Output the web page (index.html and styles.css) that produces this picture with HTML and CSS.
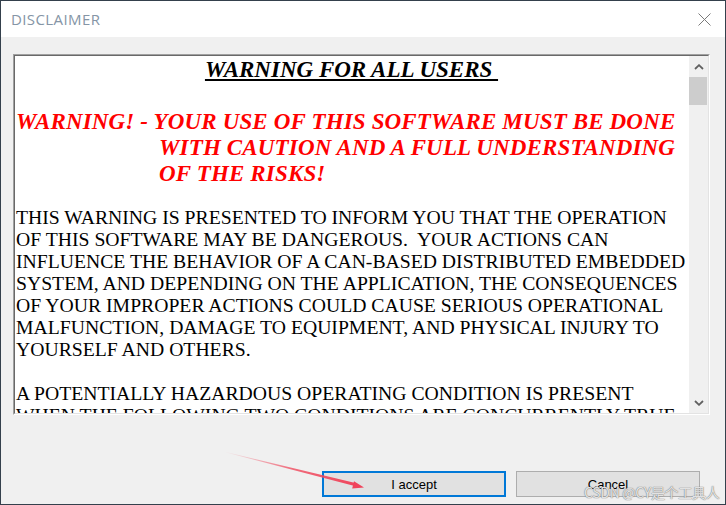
FILE: index.html
```html
<!DOCTYPE html>
<html>
<head>
<meta charset="utf-8">
<link rel="stylesheet" href="styles.css">
</head>
<body>
<div class="window">
  <div class="titlebar">
    <span class="title">DISCLAIMER</span>
    <svg class="close" width="13" height="13" viewBox="0 0 13 13"><path d="M0.5 0.5 L12.5 12.5 M12.5 0.5 L0.5 12.5" stroke="#7a7a7a" stroke-width="1" fill="none"/></svg>
  </div>
  <div class="body">
    <div class="textbox">
      <div class="textbox-inner">
        <div class="content">
          <p class="heading">WARNING FOR ALL USERS&nbsp;</p>
          <p class="alert">WARNING! - YOUR USE OF THIS SOFTWARE MUST BE DONE<br>WITH CAUTION AND A FULL UNDERSTANDING<br>OF THE RISKS!</p>
          <p class="para">THIS WARNING IS PRESENTED TO INFORM YOU THAT THE OPERATION<br>OF THIS SOFTWARE MAY BE DANGEROUS.&nbsp; YOUR ACTIONS CAN<br>INFLUENCE THE BEHAVIOR OF A CAN-BASED DISTRIBUTED EMBEDDED<br>SYSTEM, AND DEPENDING ON THE APPLICATION, THE CONSEQUENCES<br>OF YOUR IMPROPER ACTIONS COULD CAUSE SERIOUS OPERATIONAL<br>MALFUNCTION, DAMAGE TO EQUIPMENT, AND PHYSICAL INJURY TO<br>YOURSELF AND OTHERS.</p>
          <p class="para">A POTENTIALLY HAZARDOUS OPERATING CONDITION IS PRESENT<br>WHEN THE FOLLOWING TWO CONDITIONS ARE CONCURRENTLY TRUE:<br>THE PRODUCT IS PHYSICALLY CONNECTED TO A REAL APPLICATION</p>
        </div>
        <div class="scrollbar">
          <div class="sb-btn"><svg width="10" height="6" viewBox="0 0 10 6"><path d="M1 5 L5 1.2 L9 5" stroke="#606060" stroke-width="1.8" fill="none"/></svg></div>
          <div class="track"><div class="thumb"></div></div>
          <div class="sb-btn"><svg width="10" height="6" viewBox="0 0 10 6"><path d="M1 1 L5 4.8 L9 1" stroke="#606060" stroke-width="1.8" fill="none"/></svg></div>
        </div>
      </div>
    </div>
    <div class="buttons">
      <button class="btn btn-default">I accept</button>
      <button class="btn">Cancel</button>
    </div>
  </div>
  <svg class="pointer" width="726" height="505" viewBox="0 0 726 505">
    <defs>
      <linearGradient id="g" gradientUnits="userSpaceOnUse" x1="225" y1="452" x2="360" y2="486">
        <stop offset="0" stop-color="#f04a5e" stop-opacity="0"/>
        <stop offset="0.5" stop-color="#f04a5e" stop-opacity="0.8"/>
        <stop offset="1" stop-color="#f0435a" stop-opacity="1"/>
      </linearGradient>
    </defs>
    <polygon points="225.1,451.8 224.9,452.2 354.6,486 355.4,483" fill="url(#g)"/>
    <polygon points="364,487.5 352.2,488.6 354,481.2" fill="#f0435a"/>
  </svg>
  <div class="watermark">CSDN @CY是个工具人</div>
</div>
</body>
</html>
```
FILE: styles.css
```css
* { box-sizing: border-box; }
html, body { margin: 0; padding: 0; }
body { width: 726px; height: 505px; overflow: hidden; background: #f0f0f0; }

.window {
  position: relative;
  width: 726px;
  height: 505px;
  border: 1px solid #34404c;
  background: #f0f0f0;
  display: flex;
  flex-direction: column;
}

.titlebar {
  height: 36px;
  background: #fff;
  display: flex;
  align-items: center;
  justify-content: space-between;
  padding: 0 14px 0 10px;
  flex: none;
}
.title {
  font-family: "Open Sans", "Noto Sans", sans-serif;
  font-size: 15px;
  color: #8595a6;
  letter-spacing: 0.4px;
}
.close { display: block; }

.body {
  flex: 1;
  padding: 17px 0 0 12px;
  display: flex;
  flex-direction: column;
}

.textbox {
  width: 697px;
  height: 361px;
  border: 1px solid;
  border-color: #a0a0a0 #ffffff #ffffff #a0a0a0;
}
.textbox-inner {
  height: 100%;
  border: 1px solid;
  border-color: #696969 #e3e3e3 #e3e3e3 #696969;
  display: flex;
  background: #fff;
}
.content {
  flex: 1;
  overflow: hidden;
  padding: 2px 0 0 1px;
  font-family: "Liberation Serif", "Times New Roman", serif;
  color: #000;
}
.content p { margin: 0; white-space: nowrap; }

.heading {
  text-align: center;
  font-weight: bold;
  font-style: italic;
  text-decoration: underline;
  font-size: 23px;
  line-height: 24px;
  padding-right: 2px;
}
.alert {
  margin-top: 27px !important;
  color: #ff0000;
  font-weight: bold;
  font-style: italic;
  font-size: 23px;
  line-height: 26px;
  padding-left: 143px;
  text-indent: -143px;
  letter-spacing: 0.15px;
}
.para {
  margin-top: 19px !important;
  font-size: 19.7px;
  line-height: 22px;
}
.para + .para { margin-top: 22px !important; }

.scrollbar {
  width: 19px;
  flex: none;
  background: #f0f0f0;
  display: flex;
  flex-direction: column;
}
.sb-btn {
  height: 21px;
  display: flex;
  align-items: center;
  justify-content: center;
  flex: none;
}
.track { flex: 1; }
.thumb { height: 28px; background: #cdcdcd; margin: 0 1px 0 0; }

.buttons {
  display: flex;
  gap: 10px;
  margin-top: 56px;
  padding-left: 309px;
}
.btn {
  width: 184px;
  height: 26px;
  margin: 0;
  padding: 0;
  background: #e1e1e1;
  border: 1px solid #adadad;
  font-family: "Liberation Sans", Arial, sans-serif;
  font-size: 13px;
  color: #000;
}
.btn-default { border: 2px solid #0078d7; }

.pointer {
  position: absolute;
  left: -1px;
  top: -1px;
  pointer-events: none;
}
.watermark {
  position: absolute;
  left: 583px;
  top: 481px;
  font-family: "Noto Sans CJK SC", sans-serif;
  font-size: 14px;
  letter-spacing: -0.3px;
  color: rgba(255, 255, 255, 0.8);
  text-shadow: 0 0 1px #7a7a7a, 0 0 1px #7a7a7a;
  white-space: nowrap;
  pointer-events: none;
}
```
